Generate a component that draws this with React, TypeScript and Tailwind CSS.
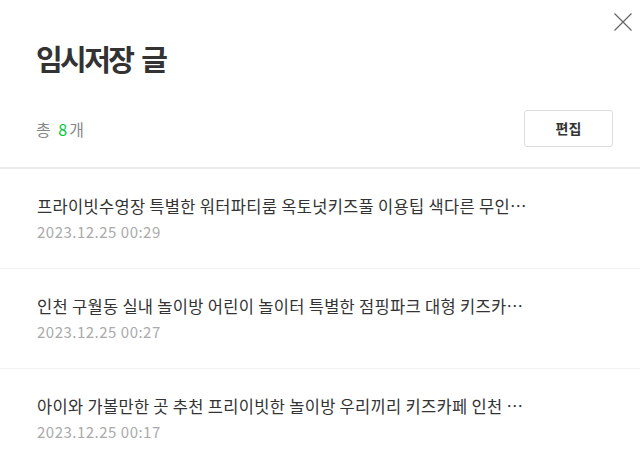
type Draft = {
  id: number;
  title: string;
  savedAt: string;
};

const drafts: Draft[] = [
  {
    id: 1,
    title: '프라이빗수영장 특별한 워터파티룸 옥토넛키즈풀 이용팁 색다른 무인키즈카페',
    savedAt: '2023.12.25 00:29',
  },
  {
    id: 2,
    title: '인천 구월동 실내 놀이방 어린이 놀이터 특별한 점핑파크 대형 키즈카페 추천',
    savedAt: '2023.12.25 00:27',
  },
  {
    id: 3,
    title: '아이와 가볼만한 곳 추천 프리이빗한 놀이방 우리끼리 키즈카페 인천 송도점 후기',
    savedAt: '2023.12.25 00:17',
  },
];

const font = "font-['Malgun_Gothic','Noto_Sans_CJK_KR',sans-serif]";

export default function App() {
  return (
    <div className={`relative h-[464px] w-[640px] overflow-hidden bg-white ${font}`}>
      <button
        type="button"
        aria-label="닫기"
        className="absolute left-[613px] top-[12px] text-[#666]"
      >
        <svg width="20" height="20" viewBox="0 0 20 20" fill="none">
          <path d="M1.5 1.5L18.5 18.5M18.5 1.5L1.5 18.5" stroke="currentColor" strokeWidth="1.2" />
        </svg>
      </button>

      <header className="pl-[36px] pr-[27px] pt-[35px]">
        <h1 className="text-[29px] font-semibold leading-[46px] tracking-[-2.6px] text-[#333] [word-spacing:5px]">
          임시저장 글
        </h1>
        <div className="mt-[29px] flex items-center justify-between pb-[20px]">
          <p className="text-[16px] tracking-[2px] text-[#888]">
            총 <span className="text-[#00c73c]">8</span>개
          </p>
          <button
            type="button"
            className="h-[37px] w-[89px] rounded-[3px] border border-[#ddd] bg-white text-[14px] font-semibold text-[#333]"
          >
            편집
          </button>
        </div>
      </header>

      <ul className="border-t-2 border-[#ebebeb]">
        {drafts.map((draft) => (
          <li
            key={draft.id}
            className="h-[100px] border-b border-[#f2f2f2] px-[37px] pt-[25px]"
          >
            <p className="w-[494px] truncate text-[16.5px] leading-[24px] tracking-[0.3px] text-[#333]">
              {draft.title}
            </p>
            <p className="mt-[4px] text-[15px] leading-[20px] tracking-[0.5px] text-[#aaa]">
              {draft.savedAt}
            </p>
          </li>
        ))}
      </ul>
    </div>
  );
}
